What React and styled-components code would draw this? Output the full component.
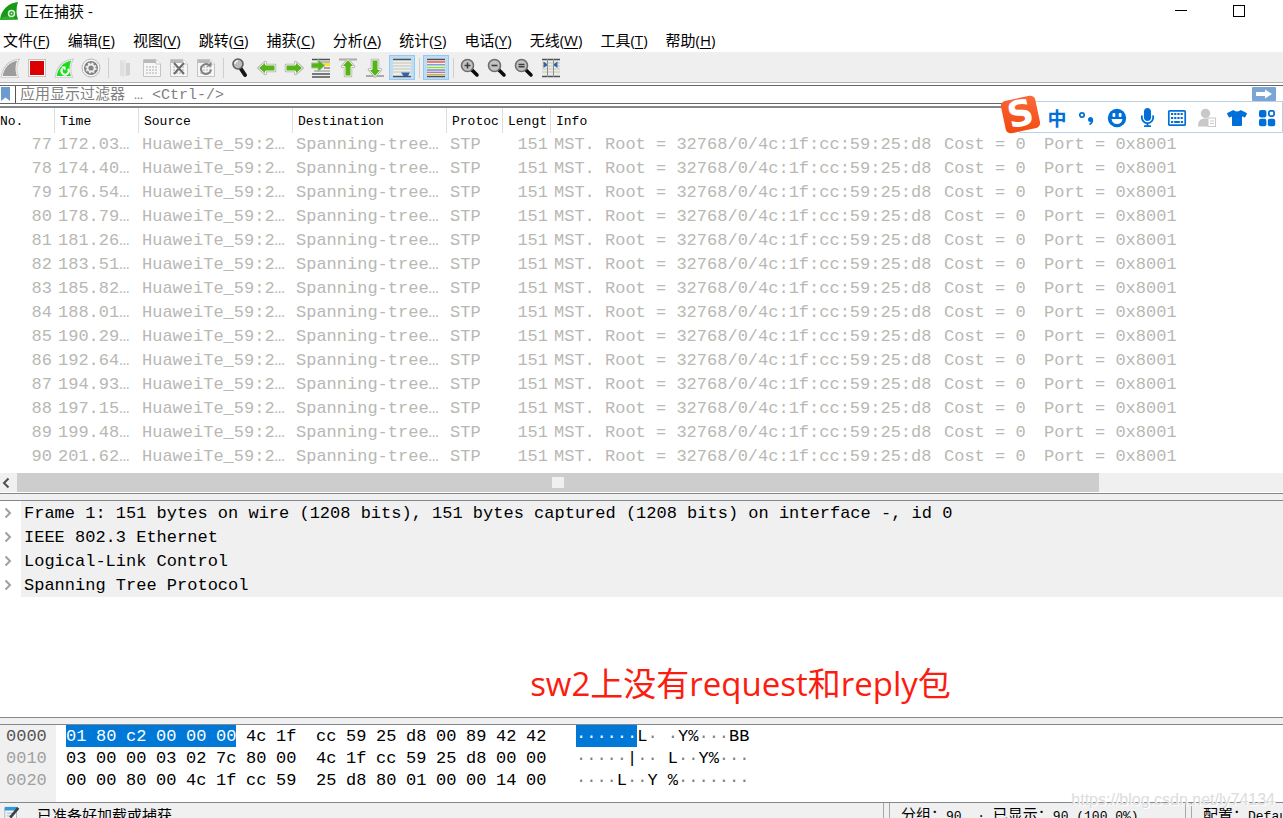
// src/App.jsx
import React, { useState } from "react";
import styled, { createGlobalStyle } from "styled-components";
import { FaMicrophone, FaTshirt } from "react-icons/fa";

const menus = [
  ["文件", "F"],
  ["编辑", "E"],
  ["视图", "V"],
  ["跳转", "G"],
  ["捕获", "C"],
  ["分析", "A"],
  ["统计", "S"],
  ["电话", "Y"],
  ["无线", "W"],
  ["工具", "T"],
  ["帮助", "H"],
];

const times = [
  "172.03…",
  "174.40…",
  "176.54…",
  "178.79…",
  "181.26…",
  "183.51…",
  "185.82…",
  "188.01…",
  "190.29…",
  "192.64…",
  "194.93…",
  "197.15…",
  "199.48…",
  "201.62…",
];

const packets = times.map((time, i) => ({
  no: 77 + i,
  time,
  source: "HuaweiTe_59:2…",
  destination: "Spanning-tree…",
  protocol: "STP",
  length: 151,
  info: ["MST. Root = 32768/0/4c:1f:cc:59:25:d8", "Cost = 0", "Port = 0x8001"],
}));

const details = [
  "Frame 1: 151 bytes on wire (1208 bits), 151 bytes captured (1208 bits) on interface -, id 0",
  "IEEE 802.3 Ethernet",
  "Logical-Link Control",
  "Spanning Tree Protocol",
];

const dump = [
  {
    offset: "0000",
    selected: 6,
    bytes: "01 80 c2 00 00 00 4c 1f cc 59 25 d8 00 89 42 42",
    ascii: "······L· ·Y%···BB",
  },
  {
    offset: "0010",
    selected: 0,
    bytes: "03 00 00 03 02 7c 80 00 4c 1f cc 59 25 d8 00 00",
    ascii: "·····|·· L··Y%···",
  },
  {
    offset: "0020",
    selected: 0,
    bytes: "00 00 80 00 4c 1f cc 59 25 d8 80 01 00 00 14 00",
    ascii: "····L··Y %·······",
  },
];

/* ---------- icons ---------- */

const Icon = ({ children, size = 20 }) => (
  <svg width={size} height={size} viewBox="0 0 20 20" fill="none" aria-hidden="true">
    {children}
  </svg>
);

const FIN = "M2 18.5C3.500 10 9 3.500 18 2C15.500 7 15.500 13 17.500 18.500Z";

const AppLogo = () => (
  <Icon>
    <path d="M0 19C1 9 8 2 18 1C16 7 16 13 18 18.500Z" fill="#169a16" />
    <path d="M0 19C3 14 9 15 18 18.500Z" fill="#2fae2b" />
    <circle cx="11.500" cy="12.500" r="3" stroke="#dff5dc" strokeWidth="1.500" />
    <circle cx="11.500" cy="12.500" r="1" fill="#dff5dc" />
  </Icon>
);

const FinIcon = () => (
  <Icon>
    <path d={FIN} fill="#9a9a9a" stroke="#c9c9c9" strokeWidth="2.500" />
    <path d={FIN} fill="#9c9c9c" stroke="#f4f4f4" strokeWidth="1" />
  </Icon>
);

const StopIcon = () => (
  <Icon>
    <rect x="1.500" y="1.500" width="17" height="17" fill="#fff" stroke="#c4c4c4" />
    <rect x="3" y="3" width="14" height="14" fill="#dc0000" />
  </Icon>
);

const RestartIcon = () => (
  <Icon>
    <path d={FIN} fill="#1fe01f" stroke="#c9c9c9" strokeWidth="2.500" />
    <path d={FIN} fill="#1bdc1b" stroke="#f4f4f4" strokeWidth="1" />
    <path d="M8.500 10.500A3.600 3.600 0 1 0 14 10.800" stroke="#fff" strokeWidth="2" />
    <path d="M7 8.500H11.500V12.500Z" fill="#fff" />
  </Icon>
);

const GearIcon = () => (
  <Icon>
    <circle cx="10" cy="10" r="9" fill="#f5f5f5" stroke="#b8b8b8" />
    <circle cx="10" cy="10" r="7" fill="#7f7f7f" />
    <circle cx="10" cy="10" r="4.400" fill="#f0f0f0" />
    <circle cx="10" cy="10" r="4.800" stroke="#f0f0f0" strokeWidth="1.600" strokeDasharray="1.900 1.870" />
    <circle cx="10" cy="10" r="2.600" fill="#858585" />
  </Icon>
);

const FolderIcon = () => (
  <Icon>
    <path d="M5 2H11V18H5Z" fill="#e6e6e6" />
    <path d="M11 5H15V17L11 18Z" fill="#d2d2d2" />
    <path d="M5 2L9 5V19L5 17Z" fill="#dfdfdf" />
  </Icon>
);

const DocIcon = ({ children }) => (
  <Icon>
    <path d="M1.500 1.500H14L18.500 6V18.500H1.500Z" fill="#f6f6f6" stroke="#c4c4c4" />
    <path d="M2 2H14V5H2Z" fill="#b9b9b9" />
    <path d="M14 1.500V6H18.500" fill="#fff" stroke="#c8c8c8" />
    <path d="M4 9H16M4 12H16M4 15H16" stroke="#d2d2d2" strokeWidth="2" strokeDasharray="2 1" />
    {children}
  </Icon>
);

const FindIcon = () => (
  <Icon>
    <path d="M11 11L15 17" stroke="#161616" strokeWidth="4" strokeLinecap="round" />
    <circle cx="8" cy="6" r="5" fill="#bcbcbc" stroke="#5e5e5e" strokeWidth="1.600" />
    <path d="M5 6A3 3 0 0 1 8 3" stroke="#f1f1f1" strokeWidth="1.500" />
  </Icon>
);

const ArrowIcon = ({ turn = 0, edge, flip }) => (
  <Icon>
    {edge && <path d={flip ? "M1 18H19" : "M1 1.500H19"} stroke="#a9a9a9" strokeWidth="2" />}
    <g transform={`rotate(${turn} 10 10)`}>
      <path
        d="M1.500 10L8.500 4V7H18V13H8.500V16Z"
        fill="#55b516"
        stroke="#b2b2b2"
        strokeWidth="2.500"
        strokeLinejoin="round"
      />
      <path
        d="M1.500 10L8.500 4V7H18V13H8.500V16Z"
        fill="#55b516"
        stroke="#eef5e8"
        strokeWidth="1"
      />
    </g>
  </Icon>
);

const GotoIcon = () => (
  <Icon>
    <path d="M1 1.500H19M1 16H19M1 19H19" stroke="#525252" strokeWidth="1.500" />
    <path d="M8 4H19M3 13H19" stroke="#8a8a8a" />
    <path d="M13 6.500H19" stroke="#ffe02e" strokeWidth="3" />
    <path d="M13 10H19" stroke="#525252" />
    <path
      d="M0.500 5H7V1.500L14 7.500L7 13.500V10H0.500Z"
      fill="#55b516"
      stroke="#a9bf9c"
      strokeWidth="1"
    />
  </Icon>
);

const AutoScrollIcon = () => (
  <Icon>
    <rect x="1" y="1" width="18" height="18" fill="#eef0ea" />
    <path d="M1 1.500H19M1 18.500H19" stroke="#4d5256" strokeWidth="1.500" />
    <path d="M1 5H19M1 8H19M1 11H19M1 14H19" stroke="#c0c3bd" />
    <path d="M9 14.500H18L16 18H11.500Z" fill="#2f63ae" />
  </Icon>
);

const ColorizeIcon = () => (
  <Icon>
    <rect x="1" y="1" width="18" height="18" fill="#f4f4f0" />
    <path d="M1 1.500H19M1 18.500H19" stroke="#4d5256" strokeWidth="1.500" />
    <path d="M1 4H19" stroke="#ee3a35" strokeWidth="1.300" />
    <path d="M1 6.800H19" stroke="#6a92c8" strokeWidth="1.300" />
    <path d="M1 9.500H19" stroke="#86dc3a" strokeWidth="1.300" />
    <path d="M1 12H19" stroke="#5f7fb8" strokeWidth="1.300" />
    <path d="M1 14.300H19" stroke="#9b79b4" strokeWidth="1.300" />
    <path d="M1 16.500H19" stroke="#d2b13a" strokeWidth="1.300" />
  </Icon>
);

const ZoomIcon = ({ mark }) => (
  <Icon>
    <path d="M12 12L17 17" stroke="#0c0c0c" strokeWidth="3.500" strokeLinecap="round" />
    <circle cx="7.500" cy="7.500" r="6" fill="#c3c3c3" stroke="#6d6d6d" strokeWidth="1.600" />
    <path d={mark} stroke="#3d3d3d" strokeWidth="1.600" />
  </Icon>
);

const ColumnsIcon = () => (
  <Icon>
    <rect x="1" y="1" width="18" height="18" fill="#ecece6" />
    <path d="M1 1.500H19M1 18.500H19" stroke="#4d5256" strokeWidth="1.500" />
    <path d="M1 5H19M1 8H19M1 11H19M1 14H19" stroke="#c6c8c2" />
    <path d="M6.500 1V19M12.500 1V19" stroke="#8d908c" />
    <path d="M2.500 3.500L6 6V7.500L2.500 10ZM16.500 3.500L13 6V7.500L16.500 10Z" fill="#2f63ae" />
  </Icon>
);

const Chevron = ({ left }) => (
  <svg width="10" height="12" viewBox="0 0 10 12" fill="none" aria-hidden="true">
    <path
      d={left ? "M7.500 1.500L3 6L7.500 10.500" : "M2.500 1.500L7 6L2.500 10.500"}
      stroke={left ? "#505050" : "#a0a0a0"}
      strokeWidth="2"
    />
  </svg>
);

const BookmarkIcon = () => (
  <svg width="9" height="15" viewBox="0 0 9 15" aria-hidden="true">
    <path d="M0 0H9V14L4.500 10.500L0 14Z" fill="#6d9bd0" />
  </svg>
);

const ApplyIcon = () => (
  <svg width="18" height="10" viewBox="0 0 18 10" aria-hidden="true">
    <path d="M1 3H10V0.500L17 5L10 9.500V7H1Z" fill="#fff" />
  </svg>
);

const NoteIcon = () => (
  <Icon size={18}>
    <path d="M2 2H15V18H2Z" fill="#f3f6f9" stroke="#a7b4bd" />
    <path d="M2 1H16V5H2Z" fill="#2f9bd6" />
    <path d="M4 8H12M4 11H10M4 14H9" stroke="#9fb0bb" />
    <path d="M17 2L8 13" stroke="#3b4349" strokeWidth="3" />
  </Icon>
);

const PunctIcon = () => (
  <Icon>
    <circle cx="5" cy="7" r="2.200" stroke="#0070d8" strokeWidth="1.700" />
    <circle cx="13.500" cy="11.500" r="2.500" fill="#0070d8" />
    <path d="M15.500 11.500C15.500 14 14.500 15.500 12.500 16.500" stroke="#0070d8" strokeWidth="1.600" />
  </Icon>
);

const SmileIcon = () => (
  <Icon>
    <circle cx="10" cy="10" r="9.200" fill="#0070d8" />
    <rect x="5.500" y="5" width="2.800" height="4" rx="1" fill="#fff" />
    <rect x="11.700" y="5" width="2.800" height="4" rx="1" fill="#fff" />
    <path d="M4.500 11H15.500C15 14.500 13 16 10 16C7 16 5 14.500 4.500 11Z" fill="#fff" />
  </Icon>
);

const KeyboardIcon = () => (
  <Icon>
    <rect x="1.800" y="2.800" width="16.400" height="14.400" rx="1" stroke="#0070d8" strokeWidth="1.700" />
    <path d="M4 6H16M4 10H16" stroke="#0070d8" strokeWidth="2.200" strokeDasharray="2.200 1" />
    <path d="M4 14H6.200M7.200 14H12.800M13.800 14H16" stroke="#0070d8" strokeWidth="2" />
  </Icon>
);

const PersonIcon = () => (
  <Icon>
    <circle cx="8.500" cy="5.500" r="4.700" fill="#c8c8c8" />
    <path d="M1 18.500C1 13 3 10.500 8.500 10.500H11V18.500Z" fill="#c8c8c8" />
    <rect x="11" y="10" width="7.500" height="8.500" fill="#fff" stroke="#c8c8c8" />
    <path d="M13 13H17M13 15.500H17" stroke="#c8c8c8" />
  </Icon>
);

const AppsIcon = () => (
  <Icon>
    <rect x="2" y="2" width="7.400" height="7.400" rx="2" fill="#0070d8" />
    <rect x="11.900" y="2.900" width="5.200" height="5.200" rx="1.500" stroke="#0070d8" strokeWidth="1.800" />
    <rect x="2" y="10.800" width="7.400" height="7.400" rx="2" fill="#0070d8" />
    <rect x="10.800" y="10.800" width="7.400" height="7.400" rx="2" fill="#0070d8" />
  </Icon>
);

const toolbar = [
  { label: "开始捕获", icon: <FinIcon /> },
  { label: "停止捕获", icon: <StopIcon /> },
  { label: "重新开始捕获", icon: <RestartIcon /> },
  { label: "捕获选项", icon: <GearIcon /> },
  null,
  { label: "打开", icon: <FolderIcon /> },
  { label: "保存", icon: <DocIcon /> },
  {
    label: "关闭",
    icon: (
      <DocIcon>
        <path d="M5 5L15 16M15 5L5 16" stroke="#6c6c6c" strokeWidth="2" />
      </DocIcon>
    ),
  },
  {
    label: "重新加载",
    icon: (
      <DocIcon>
        <path d="M13 7A5 5 0 1 0 15 11.500" stroke="#808080" strokeWidth="2" />
        <path d="M10.500 8.500H15.500V3.500Z" fill="#808080" />
      </DocIcon>
    ),
  },
  null,
  { label: "查找", icon: <FindIcon /> },
  { label: "上一分组", icon: <ArrowIcon /> },
  { label: "下一分组", icon: <ArrowIcon turn={180} /> },
  { label: "转到分组", icon: <GotoIcon /> },
  { label: "首个分组", icon: <ArrowIcon turn={90} edge /> },
  { label: "最新分组", icon: <ArrowIcon turn={270} edge flip /> },
  { label: "自动滚动", icon: <AutoScrollIcon />, toggle: true },
  null,
  { label: "着色", icon: <ColorizeIcon />, toggle: true },
  null,
  { label: "放大", icon: <ZoomIcon mark="M4.500 7.500H10.500M7.500 4.500V10.500" /> },
  { label: "缩小", icon: <ZoomIcon mark="M4.500 7.500H10.500" /> },
  { label: "原始大小", icon: <ZoomIcon mark="M4.500 6.500H10.500M4.500 8.700H10.500" /> },
  { label: "调整列宽", icon: <ColumnsIcon /> },
];

const imeTools = [
  { label: "标点", icon: <PunctIcon /> },
  { label: "表情", icon: <SmileIcon /> },
  { label: "语音", icon: <FaMicrophone size={19} /> },
  { label: "键盘", icon: <KeyboardIcon /> },
  { label: "账号", icon: <PersonIcon /> },
  { label: "皮肤", icon: <FaTshirt size={20} /> },
  { label: "工具箱", icon: <AppsIcon /> },
];

const ToolBar = () => {
  const [pressed, setPressed] = useState({ 自动滚动: true, 着色: true });

  const handleClick = (item) => {
    if (!item.toggle) return;
    setPressed({ ...pressed, [item.label]: !pressed[item.label] });
  };

  return (
    <Tools>
      {toolbar.map((item, i) =>
        item ? (
          <ToolButton
            key={item.label}
            aria-label={item.label}
            $on={item.toggle && pressed[item.label]}
            onClick={() => handleClick(item)}
          >
            {item.icon}
          </ToolButton>
        ) : (
          <ToolSeparator key={i} />
        )
      )}
    </Tools>
  );
};

const PacketList = () => (
  <PacketTable>
    <colgroup>
      <Col $w={55} />
      <Col $w={84} />
      <Col $w={154} />
      <Col $w={154} />
      <Col $w={56} />
      <Col $w={48} />
      <col />
    </colgroup>
    <thead>
      <tr>
        <HeadCell $first>No.</HeadCell>
        <HeadCell>Time</HeadCell>
        <HeadCell>Source</HeadCell>
        <HeadCell>Destination</HeadCell>
        <HeadCell>Protoc</HeadCell>
        <HeadCell>Lengt</HeadCell>
        <HeadCell $last>Info</HeadCell>
      </tr>
    </thead>
    <tbody>
      {packets.map((p) => (
        <tr key={p.no}>
          <Cell $right>{p.no}</Cell>
          <Cell>{p.time}</Cell>
          <Cell>{p.source}</Cell>
          <Cell>{p.destination}</Cell>
          <Cell>{p.protocol}</Cell>
          <Cell $right>{p.length}</Cell>
          <Cell>
            <Info>
              {p.info.map((part) => (
                <span key={part}>{part}</span>
              ))}
            </Info>
          </Cell>
        </tr>
      ))}
    </tbody>
  </PacketTable>
);

const HexRow = ({ row }) => {
  const bytes = row.bytes.split(" ");
  const render = (list) => list.map((b, i) => <Byte key={i}>{b}</Byte>);

  return (
    <HexLine>
      <Offset $active={row.selected > 0}>{row.offset}</Offset>
      <Bytes>
        {row.selected > 0 && <Selected>{render(bytes.slice(0, row.selected))}</Selected>}
        {render(bytes.slice(row.selected, 8))}
      </Bytes>
      <Bytes>{render(bytes.slice(8))}</Bytes>
      <Ascii>
        {row.selected > 0 && <AsciiSelected>{row.ascii.slice(0, row.selected)}</AsciiSelected>}
        {row.ascii
          .slice(row.selected)
          .split(/(·+)/)
          .map((run, i) => (run[0] === "·" ? <Dots key={i}>{run}</Dots> : run))}
      </Ascii>
    </HexLine>
  );
};

const App = () => {
  const [filter, setFilter] = useState("");

  return (
    <Window>
      <GlobalStyle />
      <TitleBar>
        <AppLogo />
        <Title>正在捕获 -</Title>
        <WindowButton aria-label="最小化">
          <svg width="12" height="12" viewBox="0 0 12 12">
            <path d="M0 5.500H12" stroke="#000" />
          </svg>
        </WindowButton>
        <WindowButton aria-label="最大化">
          <svg width="12" height="12" viewBox="0 0 12 12" fill="none">
            <rect x="0.500" y="0.500" width="11" height="11" stroke="#000" />
          </svg>
        </WindowButton>
      </TitleBar>

      <MenuBar>
        {menus.map(([name, key]) => (
          <MenuButton key={key}>
            {name}(<u>{key}</u>)
          </MenuButton>
        ))}
      </MenuBar>

      <ToolBar />

      <FilterBar>
        <BookmarkButton aria-label="书签">
          <BookmarkIcon />
        </BookmarkButton>
        <FilterInput
          aria-label="显示过滤器"
          placeholder="应用显示过滤器 … <Ctrl-/>"
          value={filter}
          onChange={(e) => setFilter(e.target.value)}
        />
        <ApplyButton aria-label="应用">
          <ApplyIcon />
        </ApplyButton>
      </FilterBar>

      <PacketPane>
        <PacketList />
        <ScrollBar>
          <ScrollArrow aria-label="向左滚动">
            <Chevron left />
          </ScrollArrow>
          <ScrollThumb>
            <Grip />
          </ScrollThumb>
        </ScrollBar>
      </PacketPane>

      <Splitter />

      <DetailPane>
        {details.map((line) => (
          <DetailRow key={line}>
            <Expander aria-label="展开">
              <Chevron />
            </Expander>
            <DetailText>{line}</DetailText>
          </DetailRow>
        ))}
        <Remark>sw2上没有request和reply包</Remark>
      </DetailPane>

      <Splitter />

      <HexPane>
        {dump.map((row) => (
          <HexRow key={row.offset} row={row} />
        ))}
      </HexPane>

      <StatusBar>
        <StatusMain>
          <NoteIcon />
          <span>已准备好加载或捕获</span>
        </StatusMain>
        <StatusItem $w={284}>
          分组：<Latin>90  · </Latin>已显示：<Latin>90 (100.0%)</Latin>
        </StatusItem>
        <StatusItem $w={80}>
          配置：<Latin>Default</Latin>
        </StatusItem>
      </StatusBar>

      <ImeBar>
        <ImeLogo>S</ImeLogo>
        <ImeButton>中</ImeButton>
        {imeTools.map((tool) => (
          <ImeButton key={tool.label} aria-label={tool.label}>
            {tool.icon}
          </ImeButton>
        ))}
      </ImeBar>
      <Watermark>https://blog.csdn.net/ly74134</Watermark>
    </Window>
  );
};

export default App;

// Styled Components
const GlobalStyle = createGlobalStyle`
  * {
    box-sizing: border-box;
  }
  body {
    margin: 0;
    overflow: hidden;
    background: #fff;
  }
  button {
    display: flex;
    align-items: center;
    justify-content: center;
    margin: 0;
    padding: 0;
    border: none;
    background: none;
    color: inherit;
    font: inherit;
  }
  svg {
    display: block;
    flex: none;
  }
`;

const mono = `"Liberation Mono", "Noto Sans CJK SC", monospace`;
const sans = `"Open Sans", "Noto Sans CJK SC", sans-serif`;

/* the status bar runs a little below the window edge */
const Window = styled.div`
  position: relative;
  display: flex;
  flex-direction: column;
  min-height: calc(100vh + 9px);
  font-family: ${sans};
  color: #000;
`;

const TitleBar = styled.header`
  display: flex;
  align-items: center;
  height: 22px;
  padding-right: 15px;
`;

const Title = styled.h1`
  flex: 1;
  margin: 0 0 0 4px;
  font-size: 15px;
  font-weight: 400;
  line-height: 20px;
`;

const WindowButton = styled.button`
  width: 58px;
  height: 22px;
`;

const MenuBar = styled.nav`
  display: flex;
  gap: 18px;
  height: 31px;
  padding: 7px 3px 0;
  border-bottom: 1px solid #f0f0f0;
`;

const MenuButton = styled.button`
  height: 22px;
  font-size: 15px;
  line-height: 22px;
  white-space: nowrap;

  u {
    text-underline-offset: 2px;
  }
`;

const Tools = styled.div`
  display: flex;
  align-items: center;
  gap: 1px;
  height: 30px;
  margin-left: -3px;
  background: #efefef;
  border-bottom: 1px solid #b4b4b4;
`;

const ToolButton = styled.button`
  width: 26px;
  height: 25px;
  border: 1px solid ${(props) => (props.$on ? "#90c8f6" : "transparent")};
  background: ${(props) => (props.$on ? "#c0dcf3" : "none")};
`;

const ToolSeparator = styled.span`
  width: 6px;
  height: 20px;
  background: linear-gradient(#cfcfcf, #cfcfcf) center / 1px 100% no-repeat;
`;

const FilterBar = styled.div`
  display: flex;
  align-items: stretch;
  height: 19px;
  margin-top: 2px;
  border-top: 1px solid #666;
  border-bottom: 1px solid #666;
`;

const BookmarkButton = styled.button`
  width: 16px;
  padding-right: 4px;
  border-right: 1px solid #555;
`;

const FilterInput = styled.input`
  flex: 1;
  min-width: 0;
  padding: 2px 4px 0;
  border: none;
  outline: none;
  background: none;
  font-family: ${mono};
  font-size: 15px;

  &::placeholder {
    color: #808080;
    opacity: 1;
  }
`;

const ApplyButton = styled.button`
  width: 24px;
  height: 14px;
  margin: 1px 7px 0 0;
  border-radius: 1px;
  background: #7ba5d4;
`;

const PacketPane = styled.section`
  margin-top: 2px;
  padding-bottom: 1px;
  border-top: 2px solid #85858c;
`;

const PacketTable = styled.table`
  width: 100%;
  margin-bottom: 4px;
  border-collapse: separate;
  border-spacing: 0;
  table-layout: fixed;
  font-family: ${mono};
`;

const Col = styled.col`
  width: ${(props) => props.$w}px;
`;

const HeadCell = styled.th`
  height: 25px;
  padding: 2px 0 0 ${(props) => (props.$first ? 0 : 5)}px;
  border-right: ${(props) => (props.$last ? "none" : "1px solid #dedede")};
  overflow: hidden;
  font-size: 13px;
  font-weight: 400;
  text-align: left;
  white-space: nowrap;
`;

const Cell = styled.td`
  height: 24px;
  padding: 0 3px;
  overflow: hidden;
  color: #b8b8b4;
  font-size: 17px;
  line-height: 24px;
  text-align: ${(props) => (props.$right ? "right" : "left")};
  white-space: nowrap;
`;

const Info = styled.div`
  display: grid;
  grid-template-columns: 390px 100px auto;
`;

const ScrollBar = styled.div`
  display: flex;
  height: 19px;
  background: #f0f0f0;
`;

const ScrollArrow = styled.button`
  width: 17px;
  padding-right: 6px;
`;

const ScrollThumb = styled.div`
  display: flex;
  align-items: center;
  justify-content: center;
  width: 84.3%;
  background: #cdcdcd;
`;

const Grip = styled.span`
  width: 12px;
  height: 11px;
  background: #f0f0f0;
`;

const Splitter = styled.div`
  flex: none;
  height: 8px;
  border: solid #828790;
  border-width: 1px 0;
  background: #f0f0f0;
`;

const DetailPane = styled.section`
  flex: 1;
  font-family: ${mono};
`;

const DetailRow = styled.div`
  display: flex;
  height: 24px;
`;

const Expander = styled.button`
  width: 21px;
  padding-right: 5px;
`;

const DetailText = styled.span`
  flex: 1;
  padding-left: 3px;
  background: #f0f0f0;
  font-size: 17px;
  line-height: 26px;
  white-space: nowrap;
`;

const Remark = styled.p`
  margin: 63px 0 0 198px;
  color: #fb1d10;
  font-family: ${sans};
  font-size: 33px;
  line-height: 48px;
  text-align: center;
`;

const HexPane = styled.section`
  padding-bottom: 11px;
  border-bottom: 1px solid #828790;
  background: linear-gradient(90deg, #f0f0f0 56px, #fff 56px);
  font-family: ${mono};
  font-size: 17px;
  line-height: 24px;
`;

const HexLine = styled.div`
  display: flex;
  height: 22px;
  padding-left: 6px;
`;

const Offset = styled.span`
  width: 60px;
  color: ${(props) => (props.$active ? "#555" : "#a0a0a0")};
`;

const Bytes = styled.span`
  display: flex;
  gap: 10px;
  margin-right: 20px;

  & + & {
    margin-right: 30px;
  }
`;

const Byte = styled.span`
  width: 20px;
`;

const Selected = styled.span`
  display: flex;
  gap: 10px;
  background: #0078d7;
  color: #fff;
`;

const Ascii = styled.span`
  white-space: pre;
`;

const AsciiSelected = styled.span`
  display: inline-block;
  height: 22px;
  background: #0078d7;
  color: #fff;
  vertical-align: top;
`;

const Dots = styled.span`
  color: #808080;
`;

const StatusBar = styled.footer`
  display: flex;
  align-items: center;
  height: 24px;
  overflow: hidden;
  background: #f0f0f0;
  font-family: "Noto Sans CJK SC", sans-serif;
  font-size: 15px;
  line-height: 24px;
  white-space: pre;
`;

const StatusMain = styled.div`
  display: flex;
  flex: 1;
  align-items: center;
  gap: 16px;
  padding-left: 3px;
`;

const StatusItem = styled.div`
  width: ${(props) => props.$w}px;
  margin-left: 18px;
  position: relative;

  &::before {
    content: "";
    position: absolute;
    left: -18px;
    width: 5px;
    height: 24px;
    border: solid #a8a8a8;
    border-width: 0 1px;
  }
`;

const Latin = styled.span`
  font-family: ${mono};
  font-size: 13px;
`;

const ImeBar = styled.div`
  position: absolute;
  top: 101px;
  right: 0;
  display: flex;
  align-items: center;
  height: 32px;
  padding-left: 22px;
  border: 1px solid #bcd0e6;
  background: #fff;
  color: #0070d8;
`;

const ImeLogo = styled.span`
  position: absolute;
  top: -4px;
  left: -17px;
  width: 35px;
  height: 33px;
  border-radius: 5px;
  background: linear-gradient(20deg, #f2470c, #f96b3c);
  color: #fff;
  font-family: "DejaVu Sans", sans-serif;
  font-size: 36px;
  font-weight: 700;
  line-height: 32px;
  text-align: center;
  transform: rotate(-12deg);
`;

const ImeButton = styled.button`
  width: 30px;
  height: 30px;
  padding-top: 1px;
  font-family: "Noto Sans CJK SC", sans-serif;
  font-size: 19px;
  font-weight: 700;
  line-height: 28px;
`;

const Watermark = styled.span`
  position: absolute;
  right: 8px;
  bottom: 17px;
  color: #dcdcdc;
  font-family: "Liberation Sans", sans-serif;
  font-size: 16px;
  line-height: 20px;
  text-shadow: 1px 1px 0 #fff;
`;
